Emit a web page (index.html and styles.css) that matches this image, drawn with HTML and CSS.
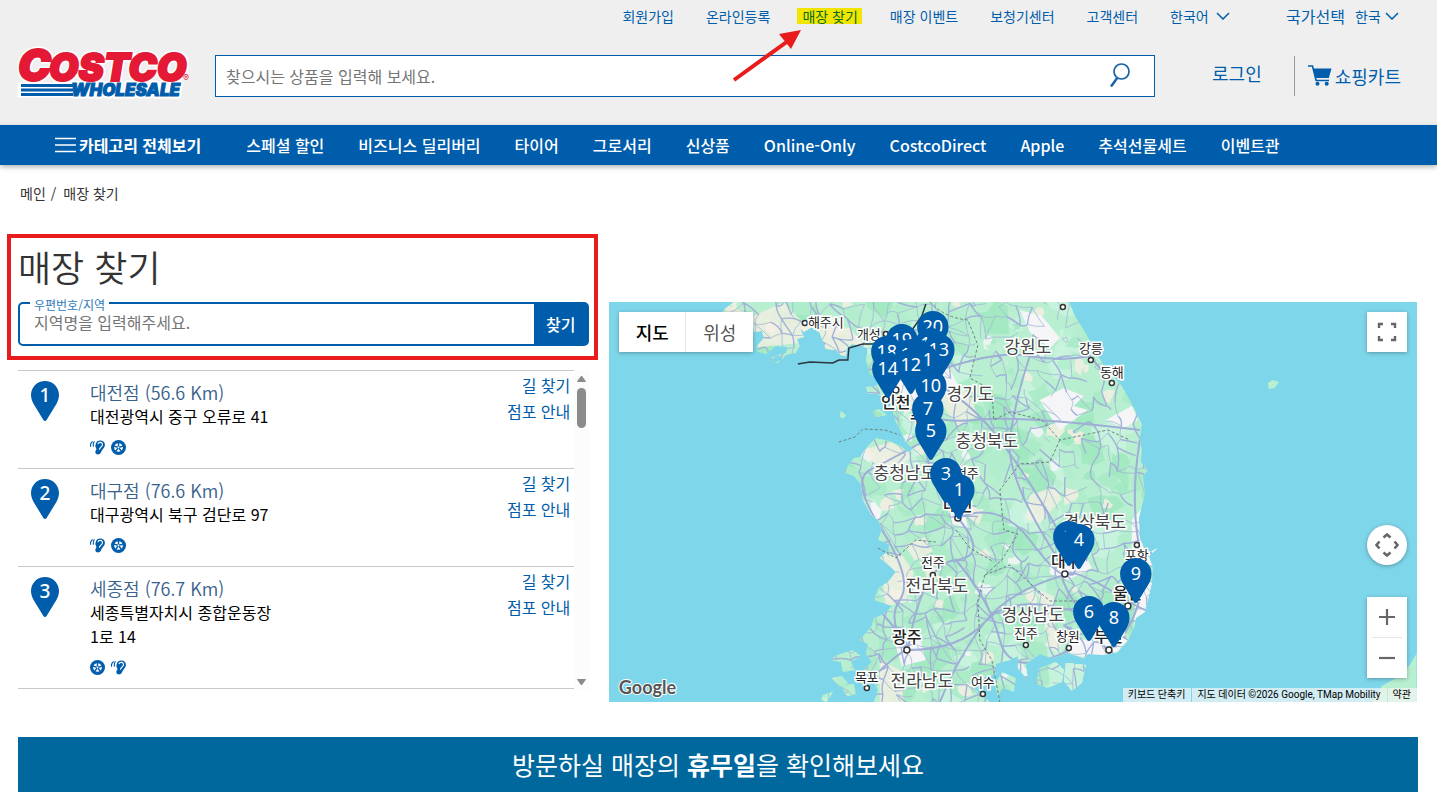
FILE: index.html
```html
<!DOCTYPE html>
<html lang="ko">
<head>
<meta charset="utf-8">
<meta name="viewport" content="width=device-width, initial-scale=1">
<title>매장 찾기 | Costco</title>
<link rel="stylesheet" href="styles.css">
</head>
<body>
<svg class="defs" width="0" height="0" aria-hidden="true">
  <defs>
    <symbol id="pin" viewBox="0 0 28 40"><path d="M14 0C6.200 0 0 6.200 0 14c0 3.200 1 6 2.600 9L12.400 39c.7 1.200 2.500 1.200 3.200 0L25.400 23C27 20 28 17.200 28 14 28 6.200 21.800 0 14 0z" fill="#005dab"/></symbol>
    <symbol id="tire" viewBox="0 0 16 16">
      <circle cx="8" cy="8" r="8" fill="#005dab"/><circle cx="8" cy="8" r="4.600" fill="#fff"/>
      <path d="M8 8V3M8 8l4.700-1.500M8 8l3 4M8 8l-3 4M8 8L3.300 6.500" stroke="#005dab" stroke-width="1.500"/>
      <circle cx="8" cy="8" r="1" fill="#fff"/>
    </symbol>
    <symbol id="ear" viewBox="0 0 16 16">
      <path d="M6 4.600C6.400 1.900 8.400.4 11 .4c3 0 4.900 2 4.900 4.600 0 2.200-1.200 3.500-2.300 4.800-1 1.200-1.200 2-1.900 3.400-.8 1.600-2.200 2.300-3.600 2.100-1.700-.2-2.600-1.500-2.400-2.900.2-1.200 1-1.700 1.100-2.600.2-.9-.5-1.500-.9-2.400-.3-.8-.2-1.800.1-2.800z" fill="#005dab"/>
      <path d="M8.400 4.400c.5-1.400 1.500-2 2.700-1.900 1.500.1 2.300 1.100 2.200 2.500-.1 1.700-1.800 2.300-2.600 3.700-.4.700-.5 1.200-.9 1.600" fill="none" stroke="#fff" stroke-width="1.200"/>
      <path d="M4.800 1.400C3.600 2.700 3.200 4.600 3.700 7M2.800 1.700C.8 3 .1 5 .8 7.200" fill="none" stroke="#005dab" stroke-width="1.200"/>
    </symbol>
    <symbol id="chev" viewBox="0 0 14 8"><path d="M1 1l6 6 6-6" fill="none" stroke="#005dab" stroke-width="1.500"/></symbol>
  </defs>
</svg>

<header class="header">
  <div class="utility">
    <a href="#">회원가입</a>
    <a href="#">온라인등록</a>
    <a href="#" class="marked">매장 찾기<svg class="arrow" viewBox="0 0 70 54" aria-hidden="true"><path d="M2 51L56 12" stroke="#e81c1c" stroke-width="4"/><path d="M69 1L47 5l12 15z" fill="#e81c1c"/></svg></a>
    <a href="#">매장 이벤트</a>
    <a href="#">보청기센터</a>
    <a href="#">고객센터</a>
    <span class="picker language">
      <select aria-label="언어"><option>한국어</option></select>
      <svg viewBox="0 0 14 8" aria-hidden="true"><use href="#chev"/></svg>
    </span>
    <span class="country">
      <label for="country">국가선택</label>
      <span class="picker">
        <select id="country"><option>한국</option></select>
        <svg viewBox="0 0 14 8" aria-hidden="true"><use href="#chev"/></svg>
      </span>
    </span>
  </div>
  <div class="masthead">
    <a class="logo" href="#" aria-label="Costco Wholesale">
      <svg viewBox="0 0 174 52">
        <g class="logo-outline">
          <text x="0" y="33" font-size="44">C</text><text x="31" y="33" font-size="38">OSTCO</text>
          <text class="wholesale" x="53" y="48" font-size="17">WHOLESALE</text>
        </g>
        <path d="M1 36h56l-4 12H1z" fill="#fff" stroke="#fff" stroke-width="3"/>
        <g class="logo-red"><text x="0" y="33" font-size="44">C</text><text x="31" y="33" font-size="38">OSTCO</text></g>
        <path d="M3 36h52v3H3zM3 40.500h52v3H3zM3 45h52v3H3z" fill="#005dab"/>
        <text class="logo-blue" x="53" y="48" font-size="17">WHOLESALE</text>
        <text class="logo-reg" x="165" y="33" font-size="9">®</text>
      </svg>
    </a>
    <form class="search" role="search">
      <input type="search" aria-label="상품 검색" placeholder="찾으시는 상품을 입력해 보세요.">
      <button type="button" aria-label="검색"><svg viewBox="0 0 20 25" aria-hidden="true"><circle cx="11.500" cy="8.500" r="7.500" fill="none" stroke="#1860a8" stroke-width="1.700"/><path d="M7.200 15L1 23.500" stroke="#1860a8" stroke-width="2.400"/></svg></button>
    </form>
    <a class="login" href="#">로그인</a>
    <a class="cart" href="#">
      <svg viewBox="0 0 24 21" aria-hidden="true"><path d="M0 1h4.500l3.600 14.500H21" fill="none" stroke="#005dab" stroke-width="1.600"/><path d="M5 3.500h18.500L20.800 13H7.500z" fill="#005dab"/><circle cx="9.500" cy="18.700" r="2" fill="#005dab"/><circle cx="18.700" cy="18.700" r="2" fill="#005dab"/></svg>
      쇼핑카트
    </a>
  </div>
</header>

<nav class="nav" aria-label="카테고리">
  <button type="button" class="all"><svg viewBox="0 0 21 16" aria-hidden="true"><path d="M0 1.500h21M0 8h21M0 14.500h21" stroke="#fff" stroke-width="1.500"/></svg>카테고리 전체보기</button>
  <a href="#">스페셜 할인</a><a href="#">비즈니스 딜리버리</a><a href="#">타이어</a><a href="#">그로서리</a><a href="#">신상품</a><a href="#">Online-Only</a><a href="#">CostcoDirect</a><a href="#">Apple</a><a href="#">추석선물세트</a><a href="#">이벤트관</a>
</nav>

<main>
  <div class="crumbs"><a href="#">메인</a><span>/</span><span>매장 찾기</span></div>
  <div class="locator">
    <section class="stores">
      <div class="finder">
        <h1>매장 찾기</h1>
        <form class="region">
          <label for="region">우편번호/지역</label>
          <input id="region" type="text" placeholder="지역명을 입력해주세요.">
          <button type="button">찾기</button>
        </form>
      </div>
      <div class="results">
        <ul>
          <li>
            <svg class="badge" viewBox="0 0 28 40"><use href="#pin"/><text x="14" y="21">1</text></svg>
            <div class="info"><a href="#">대전점 (56.6 Km)</a><p>대전광역시 중구 오류로 41</p><div class="services"><svg><use href="#ear"/></svg><svg><use href="#tire"/></svg></div></div>
            <div class="links"><a href="#">길 찾기</a><a href="#">점포 안내</a></div>
          </li>
          <li>
            <svg class="badge" viewBox="0 0 28 40"><use href="#pin"/><text x="14" y="21">2</text></svg>
            <div class="info"><a href="#">대구점 (76.6 Km)</a><p>대구광역시 북구 검단로 97</p><div class="services"><svg><use href="#ear"/></svg><svg><use href="#tire"/></svg></div></div>
            <div class="links"><a href="#">길 찾기</a><a href="#">점포 안내</a></div>
          </li>
          <li>
            <svg class="badge" viewBox="0 0 28 40"><use href="#pin"/><text x="14" y="21">3</text></svg>
            <div class="info"><a href="#">세종점 (76.7 Km)</a><p>세종특별자치시 종합운동장 1로 14</p><div class="services"><svg><use href="#tire"/></svg><svg><use href="#ear"/></svg></div></div>
            <div class="links"><a href="#">길 찾기</a><a href="#">점포 안내</a></div>
          </li>
        </ul>
        <div class="scrollbar" aria-hidden="true">
          <svg viewBox="0 0 9 7"><path d="M4.500 1L8.500 6.500h-8z" fill="#8b8b8b" stroke="#8b8b8b" stroke-linejoin="round"/></svg>
          <i></i>
          <svg class="down" viewBox="0 0 9 7"><path d="M4.500 6L.5.500h8z" fill="#8b8b8b" stroke="#8b8b8b" stroke-linejoin="round"/></svg>
        </div>
      </div>
    </section>

    <section class="map" aria-label="매장 지도">
      <svg class="canvas" viewBox="609 302 808 400" preserveAspectRatio="xMidYMid slice">
        <defs>
          <clipPath id="land">
            <path d="M734 302L726 308 718 316 735 322 753 322 754 332 762 331 764 338 758 345 757 351 766 354 776 346 788 347 786 353 778 355 770 361 778 363 786 355 796 353 800 346 797 339 804 337 800 328 795 324 804 332 812 327 820 333 823 342 826 349 836 350 841 355 846 356 847 348 852 344 862 346 872 350 878 358 884 366 882 376 876 386 866 387 868 394 878 394 884 399 890 403 893 412 896 422 901 431 905 441 913 449 908 452 901 446 889 441 876 438 868 446 860 457 854 458 848 466 844 472 854 476 861 484 863 500 871 514 879 521 882 530 878 540 889 544 889 550 880 558 890 566 896 572 888 582 879 588 874 600 892 606 884 614 874 618 872 626 860 640 868 644 866 654 872 662 864 670 873 680 878 690 874 702 990 702 980 694 975 688 986 676 996 674 996 664 1010 660 1018 656 1018 668 1028 680 1026 664 1040 654 1052 658 1068 653 1084 658 1088 654 1104 655 1118 652 1127 642 1134 628 1136 618 1145 612 1148 600 1152 584 1153 568 1149 556 1158 548 1150 552 1144 548 1140 538 1139 518 1145 494 1143 476 1148 470 1141 462 1142 450 1140 438 1142 424 1134 408 1122 386 1104 366 1096 352 1086 334 1075 316 1069 302zM835 656l18-6 8 6-10 6 4 8-12 2-2-10-10-2zM832 678l10-2 6 7-8 4zM823 695l10-3-6 10-6-2zM842 685l12-1 2 10-10 3zM1002 672l14 6-2 14-10-4-6 8-3-12zM1040 668l16-6 8 8-2 12-14 6-12-4zM1066 663l20 2-4 18-10 8-8-10zM868 348l10 2 4 10-8 8 4 10-8-4-4-14zM770 358l8-3 6 4-10 4zM841 411l5 4-2 3-4-1zM873 411l6-2 8 6-12 2zM1372 702l10-16 16-9 12-12 7-12v49zM1268 383l5-3 6 2-4 6-6 1z"/>
          </clipPath>
        </defs>
        <rect x="609" y="302" width="808" height="400" fill="#7ed6ea"/>
        <g clip-path="url(#land)">
          <rect x="609" y="302" width="808" height="400" fill="#b8efd1"/>
          <g id="terrain"></g>
          <path class="plain" d="M720 302l34 14 30-14 20 22 46 4 20 22-30 12-30-20-60 6zM896 360l34 4 40 30 8 22-20 10-18-24-36 12zM880 560l20-8 14 20-8 30-20 4zM905 545l20-8 8 14-18 10zM862 450l30-8 20 14-16 14-20-6zM880 660l20 10 4 32h-24zM1030 495l24-8 8 12-22 24-14-4zM1038 590l16 6 2 40-10-4z"/>
          <path class="city" d="M880 365l40-10 30 14 10 20-30 14-30-8zM1132 520l10-12 2 44 14-6-4 20-22-6zM1136 590l16-8-6 34-12 12zM1050 562l36-6 6 12-24 12-18-6zM948 508l16-2 4 22-16-4zM894 640l26-2 6 22-24 6zM1070 640l60-2-20 22-40-6zM1040 400l24-12 20 8-10 10 14 4-28 20-10-14zM1020 310l22 6 18 22-10 10-20-16zM1106 420l26-14 6 14-14 8zM872 500l10 10-4 14-8-10z"/>
          <g id="roads"></g>
          <g class="highways">
            <path d="M915 360Q926 400 926 440T958 518 956 560 908 650M930 380Q970 400 1000 440T1058 530 1068 574 1090 626 1110 648M958 518Q1000 500 1030 540T1068 574 1130 602 1150 550M940 370Q1000 350 1030 356T1090 356L1110 380M926 440Q890 460 870 470T882 530 900 600 908 650M908 650Q960 650 985 622T1070 610 1110 648M1068 574Q1010 590 985 622T940 702M1030 356Q1015 400 1010 440T1068 574M895 400Q930 425 975 420T1140 430M1140 440Q1130 500 1140 550T1120 640M956 560Q990 600 1000 640T1070 650M860 690Q900 650 908 650T870 600"/>
          </g>
        </g>
        <g class="borders">
          <path d="M930 302Q945 318 968 320L978 345 970 378 992 390 994 420 1010 412 1042 420 1060 440 1108 430 1130 440M1060 440L1050 462 1020 464 1000 490 1004 530 1018 534 1002 560 985 575 978 600 980 640 992 660 1000 702M985 575l25-10 20 18 20 18 40 0M956 530l14 18 24 14M878 548l18 10 20-18 20 2M839 442l16-5 8-8 22 1 15 5"/>
        </g>
        <path d="M798 364l12-2 23 1 6-3 9 0 1-12 14-4 13 0 10-4 22-4 14-20 4-12" fill="none" stroke="#293642" stroke-width="1.500"/>
        <g class="towns">
          <circle cx="805" cy="323" r="2.500"/><circle cx="886" cy="334" r="2.500"/><circle cx="1063" cy="307" r="2.500"/><circle cx="1091" cy="360" r="2.500"/><circle cx="1112" cy="383" r="2.500"/><circle cx="896" cy="390" r="3"/><circle cx="958" cy="518" r="3"/><circle cx="933" cy="575" r="2.500"/><circle cx="907" cy="650" r="3"/><circle cx="867" cy="688" r="2.500"/><circle cx="983" cy="694" r="2.500"/><circle cx="1026" cy="645" r="2.500"/><circle cx="1069" cy="648" r="2.500"/><circle cx="1109" cy="650" r="3"/><circle cx="1128" cy="606" r="3"/><circle cx="1137" cy="545" r="2.500"/><circle cx="1065" cy="574" r="3"/>
        </g>
        <g class="names small">
          <text x="826" y="327">해주시</text><text x="1091" y="353">강릉</text><text x="1112" y="377">동해</text><text x="933" y="567">전주</text><text x="867" y="682">목포</text><text x="983" y="687">여수</text><text x="1026" y="638">진주</text><text x="1068" y="641">창원</text><text x="1137" y="560">포항</text><text x="967" y="478">청주</text><text x="869" y="339">개성</text>
        </g>
        <g class="names province">
          <text x="1028" y="353">강원도</text><text x="970" y="400">경기도</text><text x="987" y="447">충청북도</text><text x="905" y="479">충청남도</text><text x="1095" y="528">경상북도</text><text x="937" y="592">전라북도</text><text x="1033" y="621">경상남도</text><text x="922" y="687">전라남도</text>
        </g>
        <g class="names metro">
          <text x="896" y="408">인천</text><text x="958" y="511">대전</text><text x="907" y="643">광주</text><text x="1066" y="567">대구</text><text x="1128" y="599">울산</text><text x="1109" y="642">부산</text><text x="925" y="423">수원</text>
        </g>
        <g id="markers" class="markers"></g>
        <text class="google" x="619" y="694">Google</text>
      </svg>
      <div class="map-type"><button type="button" class="on">지도</button><button type="button">위성</button></div>
      <button type="button" class="tool fullscreen" aria-label="전체화면"><svg viewBox="0 0 20 20"><path d="M2 6V2h4M14 2h4v4M18 14v4h-4M6 18H2v-4" fill="none" stroke="#666" stroke-width="2.400"/></svg></button>
      <div class="map-side">
        <button type="button" class="tool pan" aria-label="지도 이동"><svg viewBox="0 0 24 24"><path d="M8.500 4.500L12 1.500l3.500 3M8.500 19.500l3.500 3 3.500-3M4.500 8.500l-3 3.500 3 3.500M19.500 8.500l3 3.500-3 3.500" fill="none" stroke="#666" stroke-width="2.600"/></svg></button>
        <div class="zoom">
          <button type="button" aria-label="확대"><svg viewBox="0 0 16 16"><path d="M0 8h16M8 0v16" stroke="#666" stroke-width="2.200"/></svg></button>
          <button type="button" aria-label="축소"><svg viewBox="0 0 16 16"><path d="M0 8h16" stroke="#666" stroke-width="2.200"/></svg></button>
        </div>
      </div>
      <div class="credits"><button type="button">키보드 단축키</button><span>지도 데이터 ©2026 Google, TMap Mobility</span><a href="#">약관</a></div>
    </section>
  </div>
  <a class="banner" href="#"><span>방문하실 매장의 <b>휴무일</b>을 확인해보세요</span></a>
</main>
<script src="map.js"></script>
</body>
</html>
```

FILE: styles.css
```css
* { box-sizing: border-box; }
body {
  margin: 0;
  background: #fff;
  color: #333;
  font-family: "Noto Sans CJK KR", "Noto Sans", sans-serif;
  font-size: 16px;
  line-height: 24px;
}
a { color: #005dab; text-decoration: none; }
button, input, select { font: inherit; margin: 0; }
button { border: 0; padding: 0; background: none; cursor: pointer; }
.defs { position: absolute; }

.header { background: #efefef; height: 125px; }
.utility {
  display: flex;
  justify-content: flex-end;
  align-items: center;
  gap: 32px;
  height: 32px;
  padding-right: 38px;
  font-size: 14px;
  line-height: 16px;
}
.marked {
  position: relative;
  margin: 0 -4px 0 -5px;
  padding: 0 4px 0 5px;
  background: #f2e600;
  color: #0a6b20;
}
.arrow { position: absolute; left: -65px; top: 21px; width: 70px; height: 54px; z-index: 2; pointer-events: none; }
.picker { display: inline-grid; align-items: center; }
.picker select {
  grid-area: 1 / 1;
  appearance: none;
  border: 0;
  padding: 0 18px 0 0;
  background: none;
  color: #005dab;
  font-size: 14px;
}
.language select { padding-right: 21px; }
.picker svg { grid-area: 1 / 1; justify-self: end; width: 14px; height: 8px; pointer-events: none; }
.country { display: flex; align-items: center; gap: 10px; margin-left: 24px; color: #005dab; }
.country label { font-size: 16px; }

.masthead { display: flex; align-items: center; padding: 16px 36px 0 18px; }
.logo { flex: none; width: 174px; height: 52px; margin-right: 23px; }
.logo svg { display: block; width: 174px; height: 52px; overflow: visible; }
.logo text { font-family: Inter, sans-serif; font-weight: 900; font-style: italic; }
.logo-outline text { fill: #fff; stroke: #fff; stroke-width: 5px; stroke-linejoin: round; }
.logo-red text { fill: #e31936; stroke: #e31936; stroke-width: 2px; }
.logo .logo-blue { fill: #005dab; stroke: #005dab; stroke-width: 1px; }
.logo .logo-reg { fill: #e31936; font-weight: 400; font-style: normal; }
.search { flex: 1; display: flex; height: 42px; margin-top: 3px; border: 1px solid #005dab; background: #fff; }
.search input { flex: 1; min-width: 0; border: 0; padding: 0 10px; background: none; outline: 0; }
.search input::placeholder, .region input::placeholder { color: #757575; opacity: 1; }
.search button { width: 68px; }
.search button svg { display: block; width: 20px; height: 25px; margin: 0 auto; }
.login { margin: 0 32px 2px 57px; font-size: 18px; }
.cart { display: flex; align-items: center; gap: 3px; height: 40px; margin-top: 3px; padding-left: 13px; border-left: 1px solid #999; font-size: 18px; }
.cart svg { width: 24px; height: 21px; }

.nav {
  position: relative;
  display: flex;
  align-items: center;
  gap: 34px;
  height: 40px;
  padding: 0 55px 1px;
  background: #005dab;
  box-shadow: 0 2px 5px rgba(0, 0, 0, .3);
  white-space: nowrap;
}
.nav a, .nav button { color: #fff; font-weight: 500; }
.nav .all { display: flex; align-items: center; gap: 3px; margin-right: 11px; font-weight: 700; }
.nav .all svg { width: 21px; height: 16px; }

main { padding: 16px 19px 13px 18px; }
.crumbs { display: flex; gap: 5px; padding-left: 2px; font-size: 14px; }
.crumbs a { color: #333; }
.crumbs span + span { margin-left: 2px; }
.locator {
  display: grid;
  grid-template-columns: minmax(0, 29fr) minmax(0, 41fr);
  gap: 20px;
  margin: 29px 1px 0 0;
}
.finder { position: relative; height: 126px; padding-top: 6px; }
.finder::after {
  content: "";
  position: absolute;
  inset: 0 -9px 0 -11px;
  border: 4px solid #e81c1c;
  pointer-events: none;
}
h1 { margin: 0 0 10px; font-size: 36px; line-height: 52px; font-weight: 350; }
.region { position: relative; display: flex; height: 44px; border: 2px solid #005dab; border-radius: 5px; }
.region label {
  position: absolute;
  left: 10px;
  top: -6px;
  padding: 0 4px;
  background: #fff;
  color: #3079bb;
  font-size: 12px;
  line-height: 14px;
}
.region input { flex: 1; min-width: 0; border: 0; padding: 0 14px 5px; background: none; outline: 0; }
.region button { width: 53px; background: #005dab; color: #fff; font-weight: 500; }

.results { display: flex; height: 320px; margin-top: 10px; }
.results ul { flex: 1; margin: 0; padding: 0; list-style: none; border-top: 1px solid #c8c8c8; overflow: hidden; }
.results li { display: flex; border-bottom: 1px solid #c8c8c8; }
.badge { flex: none; width: 28px; height: 40px; margin: 10px 31px 0 13px; }
.badge text { fill: #fff; font-family: "Noto Sans", sans-serif; font-size: 19px; font-weight: 500; text-anchor: middle; }
.info { width: 200px; padding: 9px 0 13px; word-break: keep-all; }
.info a { display: block; color: #37618c; font-size: 18px; font-weight: 350; }
.info p { margin: 0; color: #000; }
.services { display: flex; gap: 6px; margin-top: 12px; height: 15px; }
.services svg { width: 15px; height: 15px; }
.links { display: flex; flex-direction: column; margin-left: auto; padding: 1px 4px 0 0; line-height: 26px; text-align: right; }
.scrollbar { display: flex; flex-direction: column; align-items: center; width: 15px; padding: 5px 0 4px; background: #fcfcfc; }
.scrollbar svg { width: 9px; height: 7px; }
.scrollbar i { width: 9px; height: 40px; margin-top: 6px; border-radius: 5px; background: #8b8b8b; }
.scrollbar .down { margin-top: auto; }

.map { position: relative; height: 400px; margin-top: 68px; overflow: hidden; background: #7ed6ea; }
.canvas { display: block; width: 100%; height: 100%; }
.plain { fill: #f5efe2; opacity: .8; }
.city { fill: #f5f5f8; }
.highways { fill: none; stroke: #9eaed6; stroke-width: 2; }
.borders { fill: none; stroke: #6d8580; stroke-width: 1; stroke-dasharray: 3 2; }
.towns { fill: #fff; stroke: #333; stroke-width: 1.5; }
.names { fill: #222; stroke: #fff; stroke-width: 3px; paint-order: stroke; text-anchor: middle; }
.small { font-size: 13px; }
.province { font-size: 17px; fill: #444; }
.metro { font-size: 16px; font-weight: 500; }
.markers text { fill: #fff; font-family: "Noto Sans", sans-serif; font-size: 18px; text-anchor: middle; }
.google { font-family: Lato, sans-serif; font-size: 18px; font-weight: 700; fill: #555; stroke: #fff; stroke-width: 2px; paint-order: stroke; }
.map-type { position: absolute; left: 10px; top: 10px; display: flex; height: 40px; background: #fff; box-shadow: 0 1px 4px rgba(0, 0, 0, .3); }
.map-type button { width: 67px; color: #565656; font-size: 18px; }
.map-type .on { color: #000; font-weight: 500; border-right: 1px solid #e6e6e6; }
.tool { display: grid; place-items: center; width: 40px; height: 40px; background: #fff; box-shadow: 0 1px 4px rgba(0, 0, 0, .3); }
.tool svg { width: 24px; height: 24px; }
.fullscreen { position: absolute; right: 10px; top: 10px; }
.fullscreen svg { width: 20px; height: 20px; }
.map-side { position: absolute; right: 10px; bottom: 24px; display: grid; gap: 32px; }
.pan { border-radius: 50%; }
.zoom { width: 40px; background: #fff; box-shadow: 0 1px 4px rgba(0, 0, 0, .3); }
.zoom button { display: grid; place-items: center; width: 30px; height: 40px; margin: 0 auto; }
.zoom button + button { height: 41px; border-top: 1px solid #e6e6e6; }
.zoom svg { width: 16px; height: 16px; }
.credits { position: absolute; right: 0; bottom: 0; display: flex; gap: 1px; font-family: Roboto, "Noto Sans CJK KR", sans-serif; font-size: 10px; line-height: 14px; }
.credits > * { padding: 0 6px 0 5px; background: rgba(245, 245, 245, .7); color: #000; }

.banner { display: grid; place-items: center; min-height: 55px; margin-top: 35px; padding-bottom: 1px; background: #00689c; color: #fff; font-size: 25px; line-height: 36px; }
.banner b { font-weight: 700; }
```

FILE: map.js
```javascript
(function () {
  var NS = 'http://www.w3.org/2000/svg';
  var seed = 20260;
  function rnd() {
    seed = (seed * 1103515245 + 12345) % 2147483648;
    return seed / 2147483648;
  }
  function add(parent, name, attrs, text) {
    var el = document.createElementNS(NS, name);
    for (var k in attrs) el.setAttribute(k, attrs[k]);
    if (text) el.textContent = text;
    parent.appendChild(el);
  }

  // Patches of forest, farmland and built-up ground
  var terrain = document.getElementById('terrain');
  var tones = ['#c9f3df', '#9fe7c0', '#b8efd1', '#a8eac7', '#f5efe2', '#b0edcd', '#f5f5f8', '#b8efd1', '#a8eac7'];
  for (var i = 0; i < 620; i++) {
    var cx = 715 + rnd() * 445, cy = 300 + rnd() * 404;
    var tone = tones[Math.floor(rnd() * tones.length)];
    var pale = tone.indexOf('#f5') === 0;
    var r = pale ? 3 + rnd() * 8 : 5 + rnd() * 17, pts = [];
    for (var a = 0; a < 9; a++) {
      var d = r * (0.45 + rnd() * 0.7), t = a / 9 * Math.PI * 2;
      pts.push((cx + Math.cos(t) * d).toFixed(1) + ',' + (cy + Math.sin(t) * d).toFixed(1));
    }
    add(terrain, 'polygon', { points: pts.join(' '), fill: tone, opacity: 0.85 });
  }

  // Local roads join the points of an uneven grid
  var step = 13, cols = 36, rows = 33, grid = [];
  for (var y = 0; y < rows; y++) {
    grid.push([]);
    for (var x = 0; x < cols; x++) {
      grid[y].push([705 + x * step + (rnd() - 0.5) * 13, 296 + y * step + (rnd() - 0.5) * 13]);
    }
  }
  var thin = '', mid = '';
  function road(p, q) {
    var mx = (p[0] + q[0]) / 2 + (rnd() - 0.5) * 7, my = (p[1] + q[1]) / 2 + (rnd() - 0.5) * 7;
    var s = 'M' + p[0].toFixed(1) + ' ' + p[1].toFixed(1) + 'Q' + mx.toFixed(1) + ' ' + my.toFixed(1) + ' ' + q[0].toFixed(1) + ' ' + q[1].toFixed(1);
    if (rnd() < 0.45) mid += s; else thin += s;
  }
  for (y = 0; y < rows - 1; y++) {
    for (x = 0; x < cols - 1; x++) {
      var keep = x > 20 && y < 18 ? 0.42 : 0.72;
      if (rnd() < keep) road(grid[y][x], grid[y][x + 1]);
      if (rnd() < keep) road(grid[y][x], grid[y + 1][x]);
      if (rnd() < 0.22) road(grid[y][x], grid[y + 1][x + 1]);
    }
  }
  var roads = document.getElementById('roads');
  add(roads, 'path', { d: thin, fill: 'none', stroke: '#a3b8d6', 'stroke-width': 0.8 });
  add(roads, 'path', { d: mid, fill: 'none', stroke: '#a1b2d8', 'stroke-width': 1.4 });

  // Stores from north to south: number, tip x, tip y
  var stores = [[20, 933, 356], [19, 902, 369], [17, 931, 373], [13, 939, 379], [18, 887, 381], [15, 911, 384],
    [11, 923, 389], [12, 911, 394], [14, 888, 398], [10, 931, 415], [7, 928, 438], [5, 931, 460], [3, 946, 503],
    [1, 959, 519], [2, 1069, 566], [4, 1079, 569], [9, 1136, 603], [6, 1089, 641], [8, 1114, 647]];
  var markers = document.getElementById('markers');
  stores.forEach(function (s) {
    add(markers, 'use', { href: '#pin', x: s[1] - 16, y: s[2] - 45, width: 32, height: 45 });
    add(markers, 'text', { x: s[1], y: s[2] - 23 }, String(s[0]));
  });
})();
```
